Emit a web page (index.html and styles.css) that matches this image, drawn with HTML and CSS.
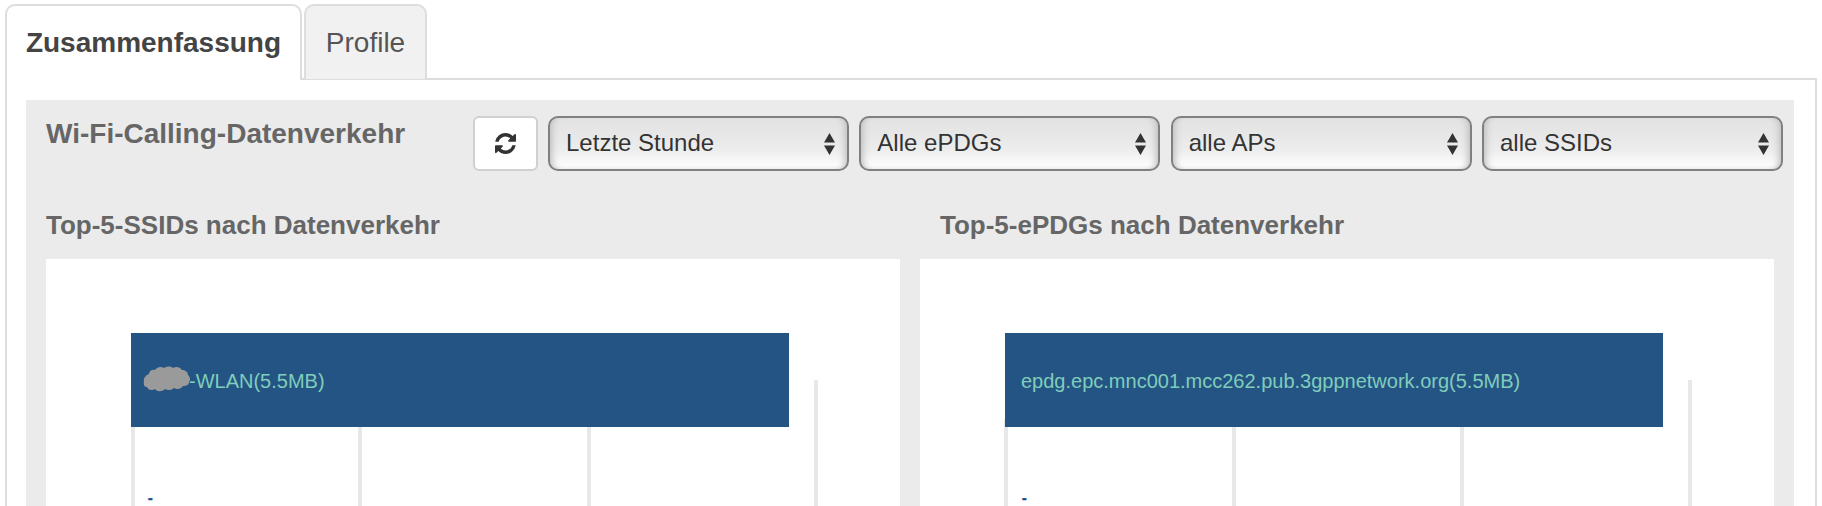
FILE: index.html
```html
<!DOCTYPE HTML>
<html>
<head>
<title>Wi-Fi-Calling-Datenverkehr</title>
<link rel="stylesheet" href="styles.css">
</head>
<body>

<div class="tabs">
	<div class="tab tab_active">Zusammenfassung</div>
	<div class="tab">Profile</div>
</div>

<div class="tab_panel">
	<div class="traffic">
		<div class="traffic_head">
			<h2 class="traffic_title">Wi-Fi-Calling-Datenverkehr</h2>
			<div class="filters">
				<button class="refresh">
					<svg width="21" height="21" viewBox="0 0 1536 1536"><path fill="#333" d="M1511 928q0 5-1 7-64 268-268 434.5t-478 166.5q-146 0-282.5-55t-243.5-157l-129 129q-19 19-45 19t-45-19-19-45v-448q0-26 19-45t45-19h448q26 0 45 19t19 45-19 45l-137 137q71 66 161 102t187 36q134 0 250-65t186-179q11-17 53-117 8-23 30-23h192q13 0 22.5 9.5t9.5 22.5zm25-800v448q0 26-19 45t-45 19h-448q-26 0-45-19t-19-45 19-45l138-138q-148-137-349-137-134 0-250 65t-186 179q-11 17-53 117-8 23-30 23h-199q-13 0-22.5-9.5t-9.5-22.5v-7q65-268 270-434.5t480-166.5q146 0 284 55.5t245 156.5l130-129q19-19 45-19t45 19 19 45z"/></svg>
				</button>
				<div class="select_wrap">
					<select class="filter"><option>Letzte Stunde</option></select>
					<svg class="select_arrows" width="11" height="22" viewBox="0 0 11 22"><path fill="#333" d="M5.500 0L11 9.500H0zM0 12.500h11L5.500 22z"/></svg>
				</div>
				<div class="select_wrap">
					<select class="filter"><option>Alle ePDGs</option></select>
					<svg class="select_arrows" width="11" height="22" viewBox="0 0 11 22"><path fill="#333" d="M5.500 0L11 9.500H0zM0 12.500h11L5.500 22z"/></svg>
				</div>
				<div class="select_wrap">
					<select class="filter"><option>alle APs</option></select>
					<svg class="select_arrows" width="11" height="22" viewBox="0 0 11 22"><path fill="#333" d="M5.500 0L11 9.500H0zM0 12.500h11L5.500 22z"/></svg>
				</div>
				<div class="select_wrap">
					<select class="filter"><option>alle SSIDs</option></select>
					<svg class="select_arrows" width="11" height="22" viewBox="0 0 11 22"><path fill="#333" d="M5.500 0L11 9.500H0zM0 12.500h11L5.500 22z"/></svg>
				</div>
			</div>
		</div>

		<div class="charts">
			<div class="chart_col">
				<h3 class="chart_title">Top-5-SSIDs nach Datenverkehr</h3>
				<div class="chart_card">
					<svg class="chart" width="854" height="247" viewBox="0 0 854 247">
						<rect class="grid" x="85" y="160" width="4" height="87"/>
						<rect class="grid" x="312" y="160" width="4" height="87"/>
						<rect class="grid" x="541" y="160" width="4" height="87"/>
						<rect class="grid" x="768" y="121" width="4" height="126"/>
						<rect class="bar" x="85" y="74" width="658" height="94"/>
						<text class="bar_label" x="143" y="129">-WLAN(5.5MB)</text>
						<!-- blurred out name -->
						<path class="redact" d="M98 123c-1-4 2-7 5-8 0-3 3-5 6-4 2-3 6-4 9-2 3-2 7-2 9 0 3-2 7-1 9 2 3 0 6 2 6 5 2 2 3 5 1 7 0 3-3 4-6 4-2 3-6 4-9 2-2 2-6 3-9 1-3 3-8 3-10 0-3 2-7 1-8-2-2 0-4-2-3-5z"/>
						<circle class="speck" cx="107" cy="122" r="0.8"/>
						<circle class="speck" cx="120" cy="115" r="0.8"/>
						<circle class="speck" cx="127" cy="120" r="0.8"/>
						<circle class="speck" cx="135" cy="118" r="0.8"/>
						<text class="tick" x="102" y="244">-</text>
					</svg>
				</div>
			</div>
			<div class="chart_col">
				<h3 class="chart_title chart_title_right">Top-5-ePDGs nach Datenverkehr</h3>
				<div class="chart_card">
					<svg class="chart" width="854" height="247" viewBox="0 0 854 247">
						<rect class="grid" x="84" y="160" width="4" height="87"/>
						<rect class="grid" x="312" y="160" width="4" height="87"/>
						<rect class="grid" x="540" y="160" width="4" height="87"/>
						<rect class="grid" x="768" y="121" width="4" height="126"/>
						<rect class="bar" x="85" y="74" width="658" height="94"/>
						<text class="bar_label" x="101" y="129">epdg.epc.mnc001.mcc262.pub.3gppnetwork.org(5.5MB)</text>
						<text class="tick" x="102" y="244">-</text>
					</svg>
				</div>
			</div>
		</div>
	</div>
</div>

</body>
</html>
```

FILE: styles.css
```css
html, body {
	margin:0;
	height:506px;
	overflow:hidden;
	background-color:#ffffff;
	font-family:"Liberation Sans", Arial, sans-serif;
}
.tabs {
	display:flex;
	align-items:flex-start;
	gap:2px;
	height:74px;
	margin:4px 0 0 5px;
	position:relative;
	z-index:1;
}
.tab {
	box-sizing:border-box;
	height:75px;
	width:123px;
	border:2px solid #dddddd;
	border-bottom:none;
	border-radius:10px 10px 0 0;
	background-color:#f1f1f1;
	color:#555555;
	font-size:28px;
	line-height:74px;
	text-align:center;
}
.tab_active {
	width:297px;
	height:76px;
	background-color:#ffffff;
	color:#444444;
	font-weight:bold;
}
.tab_panel {
	box-sizing:border-box;
	height:428px;
	margin:0 5px 0 5px;
	border:2px solid #dddddd;
	border-bottom:none;
	padding:20px 21px 0 19px;
}
.traffic {
	height:406px;
	background-color:#ebebeb;
}
.traffic_head {
	display:flex;
	justify-content:space-between;
	padding:16px 11px 0 20px;
}
.traffic_title {
	margin:2px 0 0 0;
	font-size:28px;
	line-height:32px;
	color:#666666;
}
.filters {
	display:flex;
	gap:10.33px;
}
.refresh {
	box-sizing:border-box;
	width:65px;
	height:55px;
	padding:0;
	border:2px solid #d0d0d0;
	border-radius:6px;
	background-color:#ffffff;
	display:flex;
	align-items:center;
	justify-content:center;
}
.select_wrap {
	position:relative;
}
.filter {
	display:block;
	box-sizing:border-box;
	width:301px;
	height:55px;
	padding:0 40px 2px 16px;
	appearance:none;
	border:2px solid #808080;
	border-radius:10px;
	background:linear-gradient(#e3e3e3 0%, #e8e8e8 40%, #eeeeee 65%, #fbfbfb 92%, #f2f2f2 100%);
	box-shadow:inset 8px 0 7px -6px #bdbdbd, inset -8px 0 7px -6px #bdbdbd;
	font-family:"Liberation Sans", Arial, sans-serif;
	font-size:24px;
	color:#333333;
}
.select_arrows {
	position:absolute;
	top:17px;
	right:14px;
}
.charts {
	display:grid;
	grid-template-columns:854px 854px;
	gap:20px;
	padding:0 0 0 20px;
	margin-top:40px;
}
.chart_title {
	margin:0 0 20px 0;
	font-size:26px;
	line-height:28px;
	color:#666666;
}
.chart_title_right {
	padding-left:20px;
}
.chart_card {
	background-color:#ffffff;
	height:247px;
}
.chart {
	display:block;
}
.grid {
	fill:#e8e8e8;
}
.bar {
	fill:#245483;
}
.bar_label {
	font-size:20px;
	fill:#7fcdbb;
}
.tick {
	font-size:14px;
	font-weight:bold;
	fill:#1f4c80;
	stroke:#1f4c80;
	stroke-width:0.5;
}
.redact {
	fill:#9a9a9a;
}
.speck {
	fill:#6fb0b0;
}
```
